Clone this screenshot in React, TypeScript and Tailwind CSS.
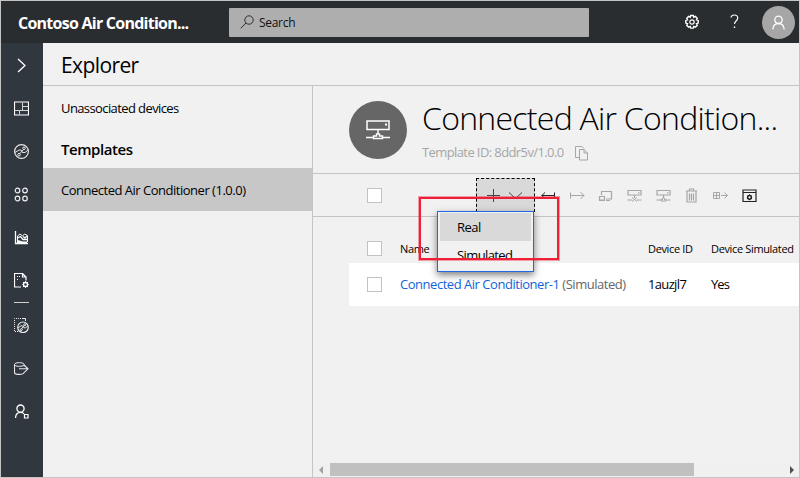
import type { ReactNode } from 'react';

function Icon({ w = 15, h = 15, className = '', children }: { w?: number; h?: number; className?: string; children: ReactNode }) {
  return (
    <svg width={w} height={h} viewBox={`0 0 ${w} ${h}`} fill="none" stroke="currentColor" strokeWidth="1" className={`block shrink-0 ${className}`}>
      {children}
    </svg>
  );
}

const sideIcons: ReactNode[] = [
  <Icon key="chevron" className="text-white"><path d="M4 1l7 6.5L4 14" strokeWidth="1.3" /></Icon>,
  <Icon key="dashboard" className="text-white"><path d="M.5 1h14v13H.5z" strokeWidth="1.2" /><path d="M.5 9.5h14M8.500 1.500v8M8.500 5.500h6M5.500 9.500v4" stroke="#d0d3d6" /></Icon>,
  <Icon key="devices" className="text-[#e8e8e8]"><circle cx="7.5" cy="7.5" r="6.900" strokeWidth="1.200" /><circle cx="10" cy="4.300" r="1.300" /><circle cx="5" cy="10.700" r="1.300" /><path d="M1 8.500l4-2.500h2l1.500 2.500h2.500l3-2.500M9.500 5.500L5.800 9.700" /></Icon>,
  <Icon key="sets" className="text-[#f0f0f0]"><circle cx="3.5" cy="3.5" r="2.300" strokeWidth="1.200" /><circle cx="11" cy="3.5" r="2.300" strokeWidth="1.200" /><circle cx="3.5" cy="11.500" r="2.300" strokeWidth="1.200" /><circle cx="11" cy="11.500" r="2.300" strokeWidth="1.200" /></Icon>,
  <Icon key="analytics" className="text-white"><path d="M1.500 1v12.500H14" strokeWidth="1.300" /><path d="M3.500 12V6l2.500-2 2.500 2 2-2 3 1.500V12" /><path d="M3.500 8l3-1.500L9 9.500h4M9 6.500l2 1.500 2-2" strokeWidth="1.300" /><path d="M3 10.500c3-1 4 1 6 1h4v1.500H3z" fill="currentColor" stroke="none" /></Icon>,
  <Icon key="jobs" className="text-white"><path d="M7 14H.5V.5h8L12 4v3.500M8.500.5V4H12" strokeWidth="1.200" /><path d="M3 3.500h4M3 6.500h2" strokeDasharray="1 1" /><circle cx="11.500" cy="11.500" r="2" strokeWidth="1.300" /><path d="M11.500 8.300v1M11.500 13.700v1M8.300 11.500h1M13.700 11.500h1M9.200 9.200l.8.800M13 13l.8.800M13.800 9.200l-.8.800M10 13l-.8.800" strokeWidth="1.200" /></Icon>,
  <Icon key="templates" className="text-[#e8e8e8]"><path d="M9 .5H.5v13H4" strokeDasharray="1 1" /><path d="M9 .5h2.500v2.500" /><circle cx="9" cy="9.300" r="5.300" strokeWidth="1.200" /><path d="M4 10l3-2.200h1.500l1.500 2h1.500l2.500-2M10.500 7l-3 4" /><circle cx="10.800" cy="6.700" r="1" /><circle cx="7.300" cy="11.700" r="1" /></Icon>,
  <Icon key="export" className="text-[#e8e8e8]"><ellipse cx="5.300" cy="3.500" rx="4.800" ry="1.900" /><path d="M.5 3.500v8c0 1 2 1.900 4.800 1.900s4.800-.9 4.800-1.900V11M10.100 3.500v2M5 7.800h9M10.500 4.500l3.500 3.300-3.500 3.300" strokeWidth="1.100" /></Icon>,
  <Icon key="admin" className="text-white"><circle cx="6.500" cy="4.600" r="3.600" strokeWidth="1.300" /><path d="M1.500 14c.2-3.600 2.200-5.600 5-5.600 1.500 0 2.700.5 3.600 1.500" strokeWidth="1.300" /><path d="M10.500 10.500h3.500v3.500h-3.500z" strokeWidth="1.200" /></Icon>,
];

function Monitor({ simulated = false }: { simulated?: boolean }) {
  return (
    <Icon className="text-[#a6a6a6]">
      <path d="M1 2.500h13v4.500H1z" strokeWidth="1.200" />
      <path d="M11 4.800h1.500M7.500 7v3M.5 12h4.500M10 12h4.500" strokeWidth="1.200" />
      {simulated ? <path d="M5 9.500l5 4M10 9.500l-5 4" /> : <path d="M5 13v-1.500h1.500V10h2v1.500H10V13z" />}
    </Icon>
  );
}

const tools: ReactNode[] = [
  <Icon key="in" className="text-[#222]"><path d="M.5 7.500h13M4 4.500L.8 7.500 4 10.500M13.500 4.500v6" /></Icon>,
  <Icon key="out" className="text-[#a6a6a6]"><path d="M.5 4.500v6M.5 7.500h13.500M10.500 4l3.500 3.500-3.500 3.500" /></Icon>,
  <Icon key="screen" className="text-[#a6a6a6]"><path d="M3.500 7V3.500h10v7.500H8M8 12.500h4M1.500 8.500h5v3.500h-5zM1 12.500h6" strokeWidth="1.200" /></Icon>,
  <Monitor key="block" simulated />,
  <Monitor key="unblock" />,
  <Icon key="trash" className="text-[#a6a6a6]"><path d="M3 3.500v10.500h9V3.500M2 3h11M5.500 3V1h4v2M5.500 5.500v7M7.500 5.500v7M9.500 5.500v7" strokeWidth="1.200" /></Icon>,
  <Icon key="move" className="text-[#a6a6a6]"><path d="M.5 4.500h6v6h-6zM3.500 4.500v6M.5 7.500h6M8 7.500h6.500M11.500 4.500l3 3-3 3" /></Icon>,
  <Icon key="settings" className="text-[#222]"><path d="M1 2h13v11.500H1zM1 4.500h13" strokeWidth="1.200" /><circle cx="7.500" cy="9.300" r="1.900" strokeWidth="1.500" /><path d="M7.500 6.300v1M7.500 11.300v1M5 7.800l.8.500M10 7.800l-.8.500M5 10.800l.8-.5M10 10.800l-.8-.5" /></Icon>,
];

function Checkbox({ className = '' }: { className?: string }) {
  return <span className={`block h-[15px] w-[15px] shrink-0 border border-[#c2c2c2] bg-white ${className}`} />;
}

function Header() {
  return (
    <header className="flex h-[42px] shrink-0 items-center bg-[#292d30]">
      <h1 className="w-[228px] whitespace-nowrap pl-[17px] pt-px text-[16px] font-bold tracking-[-0.75px] text-white">Contoso Air Condition...</h1>
      <div className="flex h-[29px] w-[360px] items-center rounded-[1px] bg-[#aeaeae] pl-[11px]">
        <Icon w={14} h={14} className="text-[#333]"><circle cx="9" cy="5" r="4.200" /><path d="M6 8L.7 13.300" /></Icon>
        <span className="ml-[5px] pt-[2px] text-[12px] tracking-[-0.3px] text-[#111]">Search</span>
      </div>
      <div className="ml-auto flex items-center">
        <Icon w={16} h={16} className="-mt-px text-white">
          <circle cx="8" cy="8" r="2.200" strokeWidth="1.200" />
          <path strokeWidth="1.400" d="M6.700 1.500h2.600l.5 1.700 1.600-.8 1.900 1.900-.8 1.600 1.700.5v2.700l-1.700.6.8 1.600-1.900 1.900-1.600-.8-.5 1.700H6.700l-.5-1.700-1.600.8-1.900-1.900.8-1.600-1.700-.6V6.400l1.700-.5-.8-1.600 1.900-1.900 1.600.8z" />
        </Icon>
        <Icon w={11} h={15} className="ml-[29px] -mt-px text-white"><path d="M2 3.500C2.300 1.800 3.600 1 5.300 1c2 0 3.400 1.100 3.400 3 0 3-3.200 3-3.200 6" strokeWidth="1.200" /><path d="M5.500 12.500v1.500" strokeWidth="1.400" /></Icon>
        <span className="ml-[22px] mr-[4px] flex h-[33px] w-[33px] items-center justify-center rounded-full bg-[#a6a6a6]">
          <Icon w={15} h={15} className="text-white"><circle cx="7.500" cy="4.800" r="3.700" strokeWidth="1.300" /><path d="M1.800 14.500c.2-3.800 2.300-6 5.700-6s5.500 2.200 5.700 6" strokeWidth="1.300" /></Icon>
        </span>
      </div>
    </header>
  );
}

function Sidebar() {
  return (
    <nav className="flex w-[42px] shrink-0 flex-col items-center bg-[#30373f]">
      {sideIcons.map((icon, i) => (
        <div key={i} className="flex flex-col items-center">
          {i === 6 && <span className="mr-px mt-px block h-px w-[15px] bg-[#d0d0d0]" />}
          <span className="flex h-[43px] w-[42px] items-center justify-center pr-px pt-px">{icon}</span>
        </div>
      ))}
    </nav>
  );
}

function Explorer() {
  return (
    <aside className="w-[270px] shrink-0 whitespace-nowrap border-r border-[#c4c4c4] text-[13px] text-black">
      <p className="flex h-[44px] items-center pl-[18px] pt-[2px] tracking-[-0.6px]">Unassociated devices</p>
      <h3 className="flex h-[38px] items-center pl-[18px] text-[15px] font-semibold tracking-[-0.45px]">Templates</h3>
      <p className="flex h-[43px] items-center bg-[#c7c7c7] pl-[18px] pt-[2px] tracking-[-0.49px]">Connected Air Conditioner (1.0.0)</p>
    </aside>
  );
}

function AddMenu() {
  return (
    <div className="relative ml-[94px] h-[34px] w-[59px]">
      <div className="flex h-full items-center border border-dashed border-black bg-[#d9d9d9] pl-[9px] text-[#444]">
        <Icon><path d="M7.500 1v13M1 7.500h13" /></Icon>
        <Icon className="ml-[7px]"><path d="M1 4.500l6.500 6 6.500-6" /></Icon>
      </div>
      <ul className="absolute left-[-39px] top-[33px] z-10 h-[61px] w-[97px] border border-[#2266e3] bg-[#f1f1f1] px-[2px] py-px text-[13px] leading-[28px] text-black shadow-[0_3px_7px_rgba(0,0,0,0.5)]">
        <li className="h-[28px] bg-[#d9d9d9] pl-[17px] tracking-[-0.5px]">Real</li>
        <li className="h-[28px] pl-[17px] tracking-[-0.6px]">Simulated</li>
      </ul>
      <div className="absolute left-[-57px] top-[19px] z-20 h-[63px] w-[140px] border-2 border-[#f01e37] shadow-[0_0_0_1px_rgba(240,30,55,0.4)]" />
    </div>
  );
}

function DevicePanel() {
  return (
    <main className="flex min-w-0 flex-1 flex-col whitespace-nowrap">
      <section className="flex h-[87px] shrink-0 pl-[36px] pt-[15px]">
        <span className="flex h-[58px] w-[58px] items-center justify-center rounded-full bg-[#666] pb-px">
          <Icon w={26} h={22} className="text-white"><path d="M2 2h22v8.500H2z" strokeWidth="1.500" /><path d="M20 5.500h2" strokeWidth="2" /><path d="M13 10.500v5M1 18.500h7M18 18.500h7M8.500 19.500v-2.500h3v-2h3v2h3v2.500z" strokeWidth="1.400" /></Icon>
        </span>
        <div className="ml-[15px]">
          <h2 className="h-[34px] text-[32px] font-light leading-[33px] tracking-[-0.73px] text-black">Connected Air Condition...</h2>
          <div className="mt-[9px] flex h-[18px] items-center text-[13px] tracking-[-0.6px] text-[#a6a6a6]">
            <span className="w-[153px]">Template ID: 8ddr5v/1.0.0</span>
            <Icon w={14} h={15}><path d="M4 11.500H.5V.5H7l2 2M4.500 3.500H9l3.500 3.500v7h-8zM9 3.500V7h3.500" /></Icon>
          </div>
        </div>
      </section>
      <section className="flex h-[44px] shrink-0 items-center border-y border-[#c4c4c4] pl-[54px]">
        <Checkbox />
        <AddMenu />
        <div className="ml-[6px] flex gap-[13.700px]">{tools}</div>
      </section>
      <section className="pl-[36px] text-[13px] text-black">
        <div className="flex h-[46px] pl-[18px] pt-[24px] text-[11px] leading-[15px] tracking-[-0.35px]">
          <Checkbox />
          <span className="ml-[18px] w-[248px]">Name</span>
          <span className="w-[63px]">Device ID</span>
          <span>Device Simulated</span>
        </div>
        <div className="flex h-[43px] items-center bg-white pl-[18px] tracking-[-0.47px]">
          <Checkbox />
          <span className="ml-[18px] w-[248px] text-[#666]"><a className="text-[#1264d8]">Connected Air Conditioner-1</a> (Simulated)</span>
          <span className="w-[63px] tracking-[-0.65px]">1auzjl7</span>
          <span className="tracking-[-0.9px]">Yes</span>
        </div>
      </section>
      <footer className="mb-px mt-auto flex h-[13px] items-center bg-[#f0f0f0] pl-[6px] pr-[5px]">
        <svg width="4" height="8" viewBox="0 0 4 8" className="text-[#a3a3a3]"><path d="M4 0v8L0 4z" fill="currentColor" /></svg>
        <span className="ml-[7px] h-[13px] w-[364px] bg-[#c0c0c0]" />
        <svg width="4" height="8" viewBox="0 0 4 8" className="ml-auto text-[#505050]"><path d="M0 0v8l4-4z" fill="currentColor" /></svg>
      </footer>
    </main>
  );
}

export default function App() {
  return (
    <div className="flex h-[478px] w-[800px] flex-col overflow-hidden border border-[#c4c4c4] bg-[#f1f1f1] font-['Open_Sans','Noto_Sans',sans-serif]">
      <Header />
      <div className="flex min-h-0 flex-1">
        <Sidebar />
        <div className="flex min-w-0 flex-1 flex-col">
          <h2 className="flex h-[43px] shrink-0 items-center border-b border-[#c4c4c4] pl-[18px] pt-[4px] text-[21px] tracking-[-0.6px] text-black">Explorer</h2>
          <div className="flex min-h-0 flex-1">
            <Explorer />
            <DevicePanel />
          </div>
        </div>
      </div>
    </div>
  );
}
